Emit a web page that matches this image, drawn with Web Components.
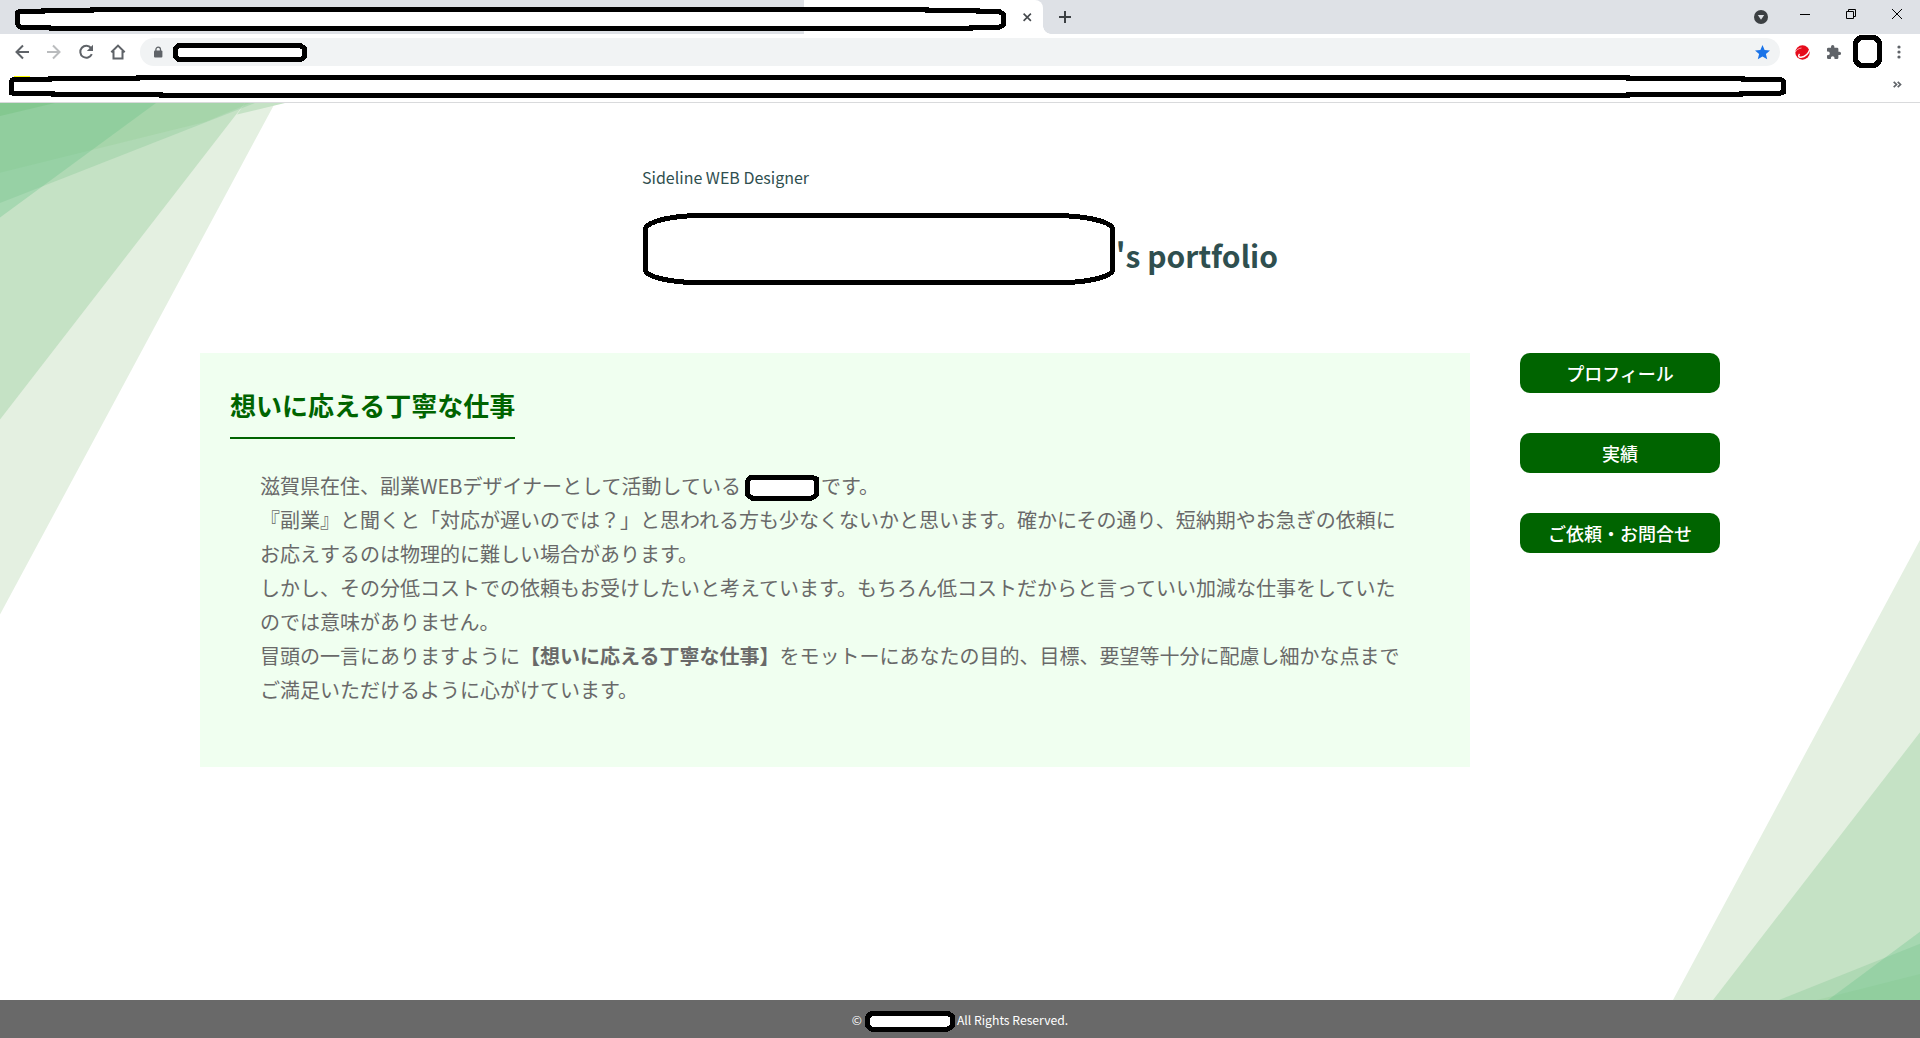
<!DOCTYPE html>
<html lang="ja"><head><meta charset="utf-8"><title>portfolio</title>
<style>
html,body{margin:0;height:100%;overflow:hidden;background:#fff}
body{font-family:"Noto Sans CJK JP","Noto Sans",sans-serif}
intro-card mask-box{margin:5px -4px 0 4px}
</style></head><body>
<browser-frame>
<portfolio-page>
<page-title slot="title" role="Sideline WEB Designer">'s portfolio</page-title>
<intro-card slot="main" heading="想いに応える丁寧な仕事">滋賀県在住、副業WEBデザイナーとして活動している<mask-box w="80" h="27" shape="name"></mask-box>です。<br>『副業』と聞くと「対応が遅いのでは？」と思われる方も少なくないかと思います。確かにその通り、短納期やお急ぎの依頼にお応えするのは物理的に難しい場合があります。<br>しかし、その分低コストでの依頼もお受けしたいと考えています。もちろん低コストだからと言っていい加減な仕事をしていたのでは意味がありません。<br>冒頭の一言にありますように<b>【想いに応える丁寧な仕事】</b>をモットーにあなたの目的、目標、要望等十分に配慮し細かな点までご満足いただけるように心がけています。</intro-card>
<nav-button slot="nav">プロフィール</nav-button>
<nav-button slot="nav">実績</nav-button>
<nav-button slot="nav">ご依頼・お問合せ</nav-button>
</portfolio-page>
</browser-frame>
<script>
const define=(name,html)=>customElements.define(name,class extends HTMLElement{
  constructor(){super();this.attachShadow({mode:'open'});}
  connectedCallback(){this.shadowRoot.innerHTML=typeof html==='function'?html(this):html;}
});

const shapes={
  tab:'M17.5 24V14Q17.5 11.5 20 11.5H43V10.5H92V9.5H927V10.5H978V11.5H999L1003.5 14V25L998 27.5H971V28.5H108V28H49V27H20Z',
  url:'M2.5 8V5L6 2.5H127L131.5 5V14L128 16.5H6L2.5 14Z',
  bookmarks:'M11.5 93V81Q12 79.5 15 79.5H50V78.5H138V77.5H1628V78.5H1743V79.5H1780L1783.5 81V92L1779 93.5H1741V94.5H1628V95.5H161V94.5H53V93H16Z',
  avatar:'M7 2.5H22L26.5 7V26L22 30.5H7L2.5 26V7Z',
  title:'M2.5 15C6 8 30 2.5 58 2.5H414C442 3 466 8 469.5 15V58C466 65 440 69.5 420 69.5H50C30 69 6 65 2.5 58Z',
  name:'M2.5 7L6 3H66L71.5 5V21L66 24.5H8L2.5 21Z',
  foot:'M2.5 6L6 2.5H83L87.5 5V15L83 18H6L2.5 15Z'
};
define('mask-box',e=>`<style>:host{display:inline-block;vertical-align:top;width:${e.getAttribute('w')}px;height:${e.getAttribute('h')}px}svg{display:block;overflow:visible}</style>
<svg width="100%" height="100%" shape-rendering="crispEdges"><path d="${shapes[e.getAttribute('shape')]}" fill="#fff" stroke="#000" stroke-width="5" stroke-linejoin="round"/></svg>`);

const icons={
  back:'<path d="M14 8H1.500M8 1.500L1.500 8l6.500 6.500" fill="none" stroke="#5f6368" stroke-width="2"/>',
  forward:'<path d="M0 8H12.500M6 1.500l6.500 6.500-6.500 6.500" fill="none" stroke="#babcbe" stroke-width="2"/>',
  reload:'<path d="M12.800 10.200A6 6 0 1 1 12 4" fill="none" stroke="#5f6368" stroke-width="2"/><path d="M14 .8V7H7.8Z" fill="#5f6368"/>',
  home:'<path d="M1.3 8.3L8 1.6l6.700 6.700M3.500 7V14.500H12.500V7" fill="none" stroke="#5f6368" stroke-width="2"/>',
  lock:'<path d="M1.900 5V3.500a2.300 2.300 0 0 1 4.600 0V5" fill="none" stroke="#5f6368" stroke-width="1.300"/><rect y="4.500" width="8.400" height="7" rx="1" fill="#5f6368"/>',
  star:'<path d="M7.500 0l2.100 5.100 5.400.4-4.100 3.500 1.300 5.300-4.700-2.900-4.700 2.900 1.300-5.300L0 5.500l5.400-.4Z" fill="#1a73e8"/>',
  trend:'<circle cx="7.500" cy="7.500" r="7.200" fill="#e60c1c"/><path d="M15 4C13.500 8.500 10 11.800 6 12.300 3.500 12.500 3 10.800 4.500 8.800" fill="none" stroke="#fff" stroke-width="1.400"/><path d="M0 7.500C1.500 4.500 4 3.300 6.500 3" fill="none" stroke="#fff" stroke-width=".6"/>',
  puzzle:'<path d="M20.500 11H19V7a2 2 0 0 0-2-2h-4V3.500a2.500 2.500 0 0 0-5 0V5H4a2 2 0 0 0-2 2v3.800h1.500a2.700 2.700 0 0 1 0 5.400H2V20a2 2 0 0 0 2 2h3.800v-1.500a2.700 2.700 0 0 1 5.400 0V22H17a2 2 0 0 0 2-2v-4h1.500a2.500 2.500 0 0 0 0-5Z" transform="scale(.67) translate(-2 -1)" fill="#5f6368"/>',
  menu:'<g fill="#5f6368"><circle cx="2" cy="2" r="1.600"/><circle cx="2" cy="7" r="1.600"/><circle cx="2" cy="12" r="1.600"/></g>',
  more:'<path d="M.7 .8L3.500 3.500.7 6.200M4.700 .8L7.500 3.500 4.700 6.200" fill="none" stroke="#5f6368" stroke-width="1.700"/>',
  close:'<path d="M.6.6l7.300 7.300M7.900.6L.6 7.900" stroke="#45494d" stroke-width="1.600"/>',
  plus:'<path d="M6 0v12M0 6h12" stroke="#3c4043" stroke-width="2"/>',
  down:'<circle cx="7" cy="7" r="7" fill="#3c4043"/><path d="M3.800 5H10.200L7 9.700Z" fill="#dee1e6"/>',
  min:'<path d="M0 .5H10" stroke="#000"/>',
  restore:'<path d="M.5 2.500H7.500V9.500H.5ZM2.500 2.500V.5H9.500V7.500H7.500" fill="none" stroke="#000"/>',
  x:'<path d="M0 0L10 10M10 0L0 10" stroke="#000"/>'
};
define('ui-icon',e=>`<style>:host{display:block;flex:none;width:${e.getAttribute('w')}px;height:${e.getAttribute('h')}px}svg{display:block;overflow:visible}</style><svg width="100%" height="100%">${icons[e.getAttribute('name')]}</svg>`);

define('browser-frame',`<style>
:host{display:flex;flex-direction:column;height:1038px;width:1920px}
.chrome{position:relative;flex:none;height:102px;border-bottom:1px solid #d9dadc;background:#fff}
.tabs{height:34px;background:#dee1e6;display:flex}
.tab{width:239px;margin-left:804px;background:#fff;border-radius:0 8px 0 0;display:flex;justify-content:flex-end;padding:12.500px 11.500px 0 0;box-sizing:border-box;align-items:flex-start}
.curve{width:8px;background:radial-gradient(circle at 100% 0,transparent 7.500px,#fff 8px) bottom/8px 8px no-repeat}
.tabs>ui-icon{margin-top:11px}
.win{display:flex;margin-left:auto;align-items:flex-start;padding-right:18px}
.bar{height:36px;display:flex;align-items:center;padding:0 19px 0 15px}
.omni{display:flex;align-items:center;box-sizing:border-box;width:1640px;height:28px;border-radius:14px;background:#f1f3f4;margin-left:14px;padding:0 10.500px 0 14px}
.marks{height:32px;display:flex;justify-content:flex-end;align-items:flex-start;padding:10.500px 19.500px 0 0;box-sizing:border-box}
.over{position:absolute;left:0;top:0}
.yl{position:absolute;left:14px;top:76px;width:16px;height:3px;background:#ff0}
slot{display:block;flex:1;min-height:0}
</style>
<div class="chrome">
<div class="tabs"><div class="tab"><ui-icon name="close" w="9" h="9"></ui-icon></div><div class="curve"></div><ui-icon name="plus" w="12" h="12" style="margin-left:8px"></ui-icon>
<div class="win"><ui-icon name="down" w="14" h="14" style="margin:10px 32px 0 0"></ui-icon><ui-icon name="min" w="10" h="1" style="margin:14px 36px 0 0"></ui-icon><ui-icon name="restore" w="10" h="10" style="margin:9px 36px 0 0"></ui-icon><ui-icon name="x" w="10" h="10" style="margin:9px 0 0 0"></ui-icon></div></div>
<div class="bar"><ui-icon name="back" w="14" h="16"></ui-icon><ui-icon name="forward" w="14" h="16" style="margin-left:18px"></ui-icon><ui-icon name="reload" w="14" h="16" style="margin-left:18px"></ui-icon><ui-icon name="home" w="16" h="16" style="margin-left:17px"></ui-icon>
<div class="omni"><ui-icon name="lock" w="8" h="12"></ui-icon><mask-box shape="url" w="134" h="19" style="margin-left:11px"></mask-box><ui-icon name="star" w="15" h="15" style="margin-left:auto"></ui-icon></div>
<ui-icon name="trend" w="15" h="15" style="margin-left:15px"></ui-icon><ui-icon name="puzzle" w="14" h="14" style="margin-left:17px"></ui-icon><mask-box shape="avatar" w="29" h="33" style="margin:-1px 0 0 12px"></mask-box><ui-icon name="menu" w="4" h="14" style="margin-left:auto"></ui-icon></div>
<div class="marks"><ui-icon name="more" w="8" h="7"></ui-icon></div>
<div class="yl"></div><mask-box class="over" shape="tab" w="1010" h="34"></mask-box><mask-box class="over" shape="bookmarks" w="1790" h="100"></mask-box>
</div><slot></slot>`);

define('corner-art',`<style>:host{position:absolute;left:0;top:0;width:1920px;height:897px}svg{display:block}</style>
<svg width="1920" height="897" viewBox="0 103 1920 897">
<path d="M0 103H275L0 614.600Z" fill="#e4f0e1"/><path d="M0 103H245L0 419.500Z" fill="#c5e2c5"/>
<path d="M245 103H285L237 114.500Z" fill="#c5e2c5"/>
<path d="M0 103H255L0 203Z" fill="rgb(127,196,144)" fill-opacity=".3"/><path d="M0 103H250L205 122L0 172.800Z" fill="rgb(110,190,100)" fill-opacity=".12"/><path d="M0 103H156L0 217.400Z" fill="rgb(97,193,132)" fill-opacity=".3"/><path d="M0 103H55L0 116Z" fill="rgb(80,180,90)" fill-opacity=".2"/>
<path d="M1920 540V1000H1673Z" fill="#e4f0e1"/><path d="M1920 732.300V1000H1713Z" fill="#c5e2c5"/><path d="M1920 943.700V1000H1779Z" fill="rgb(127,196,144)" fill-opacity=".3"/><path d="M1920 974V1000H1817Z" fill="rgb(110,190,100)" fill-opacity=".12"/><path d="M1920 931.700V1000H1828Z" fill="rgb(97,193,132)" fill-opacity=".3"/>
</svg>`);

define('portfolio-page',`<style>
:host{display:flex;flex-direction:column;height:100%;position:relative}
.head{position:relative;height:250px;display:flex;justify-content:center}
.cols{position:relative;display:flex;align-items:flex-start;padding:0 200px;gap:50px;flex:1}
nav{display:flex;flex-direction:column;gap:40px;width:200px}
</style><corner-art></corner-art><div class="head"><slot name="title"></slot></div>
<div class="cols"><slot name="main"></slot><nav><slot name="nav"></slot></nav></div><page-footer></page-footer>`);

define('page-title',e=>`<style>:host{display:block;width:636px;color:#2f4f4f}
p{margin:62px 0 0;font-size:16px;line-height:24px}
h1{margin:24px 0 0;font-size:30px;line-height:48px;font-weight:700;display:flex;align-items:flex-start;white-space:nowrap}
mask-box{margin-left:1px}
span{margin:18px 0 0 3px}</style><p>${e.getAttribute('role')}</p><h1><mask-box shape="title" w="472" h="72"></mask-box><span><slot></slot></span></h1>`);

define('intro-card',e=>`<style>:host{display:block;box-sizing:border-box;width:1270px;height:414px;background:#f0fff0;padding:30px}
h2{display:inline-block;margin:0;font-size:26px;line-height:44px;color:#006400;border-bottom:2px solid #006400;padding-bottom:10px;width:285px;white-space:nowrap;font-weight:700}
p{margin:30px 0 0;padding:0 30px;font-size:20px;line-height:34px;color:#696969;height:238px}</style><h2>${e.getAttribute('heading')}</h2><p><slot></slot></p>`);

define('nav-button',`<style>:host{display:block;height:40px;line-height:41px;border-radius:10px;background:#006400;color:#fff;font-size:18px;font-weight:500;text-align:center}</style><slot></slot>`);

define('page-footer',`<style>:host{position:relative;display:flex;justify-content:center;align-items:center;height:38px;background:#696969;color:#fff;font-size:12.200px;line-height:18px}
mask-box{margin:4px 2px 0 3px}span{white-space:nowrap;margin-top:2px}</style><span>©</span><mask-box shape="foot" w="90" h="21"></mask-box><span>All Rights Reserved.</span>`);
</script></body></html>
